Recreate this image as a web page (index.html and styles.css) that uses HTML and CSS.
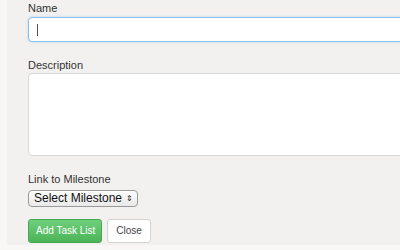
FILE: index.html
```html
<!DOCTYPE html>
<html lang="en">
<head>
  <meta charset="UTF-8" />
  <title>New Task List</title>
  <link rel="stylesheet" href="styles.css">
</head>
<body>
  <div class="panel">
    <div class="field">
      <label class="label">Name</label>
      <div class="input focused"><span class="caret"></span></div>
    </div>

    <div class="field">
      <label class="label">Description</label>
      <div class="textarea"></div>
    </div>

    <div class="field">
      <label class="label">Link to Milestone</label>
      <div class="select">Select Milestone <span class="arrows">&#8661;</span></div>
    </div>

    <div class="actions">
      <button class="button green">Add Task List</button>
      <button class="button plain">Close</button>
    </div>
  </div>
</body>
</html>
```

FILE: styles.css
```css
body {
  margin: 0;
  font-family: "Liberation Sans", Arial, sans-serif;
  background-color: #f8f7f5;
  color: #333;
  height: 250px;
  overflow: hidden;
}
.panel {
  margin-left: 7px;
  height: 245px;
  background-color: #f2f1ef;
  padding: 2px 0 0 21px;
  box-sizing: border-box;
}
.field {
  margin-bottom: 17px;
}
.label {
  display: block;
  font-size: 11px;
  color: #333;
  margin-bottom: 3px;
}
.input {
  height: 23px;
  margin-right: -10px;
  background: #fff;
  border: 1px solid #d0d0d0;
  border-radius: 4px;
  display: flex;
  align-items: center;
  padding-left: 8px;
}
.focused {
  border-color: #8ebde6;
  box-shadow: 0 0 3px #b8d8f3;
}
.caret {
  width: 1px;
  height: 12px;
  background: #555;
}
.textarea {
  height: 81px;
  margin-right: -10px;
  background: #fff;
  border: 1px solid #d8d8d6;
  border-radius: 4px;
  margin-top: -1px;
  margin-bottom: 7px;
}
.select {
  display: inline-flex;
  align-items: center;
  gap: 4px;
  height: 15px;
  padding: 0 4px 0 5px;
  font-size: 12px;
  color: #111;
  background: linear-gradient(#fdfdfd, #e9e9e9);
  border: 1px solid #9a9a9a;
  border-radius: 4px;
}
.arrows {
  font-size: 8px;
}
.actions {
  display: flex;
  gap: 5px;
  margin-top: -5px;
}
.button {
  font-family: "Liberation Sans", Arial, sans-serif;
  font-size: 10px;
  height: 24px;
  border-radius: 3px;
  cursor: pointer;
}
.green {
  padding: 0 6px 0 7px;
  color: #fff;
  background: linear-gradient(#6fcf7b, #4cb458);
  border: 1px solid #47a852;
}
.plain {
  padding: 0 8px;
  color: #444;
  background: #fff;
  border: 1px solid #d4d4d2;
}
```
